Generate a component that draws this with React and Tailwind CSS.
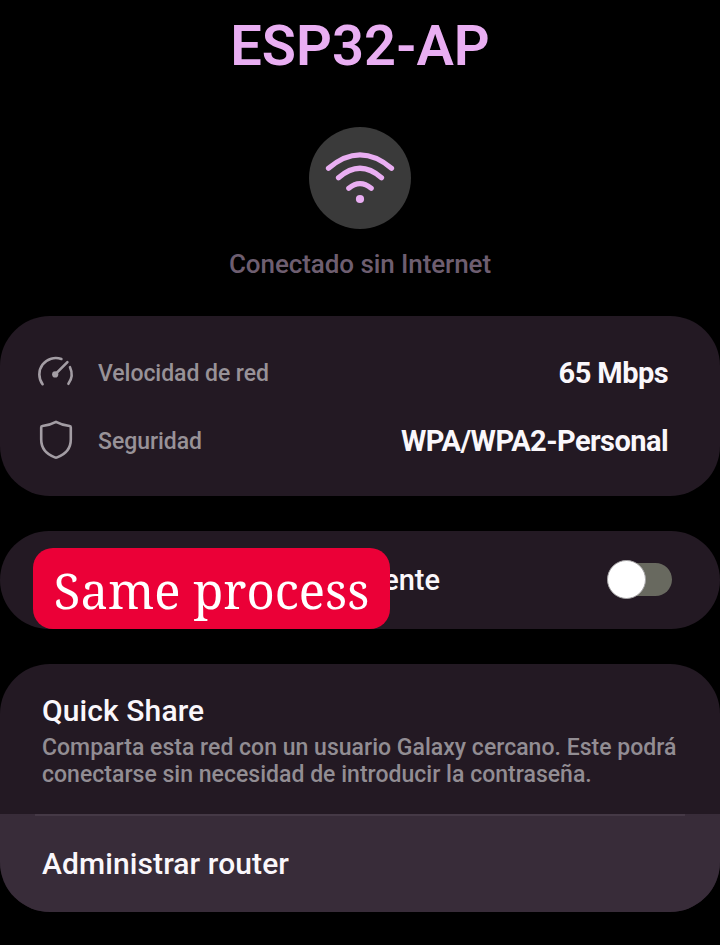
const Gauge = () => (
  <svg viewBox="0 0 40 44" className="h-11 w-10 shrink-0" fill="none" stroke="#a39da4" strokeWidth="2.6" strokeLinecap="round">
    <path d="M6.6 33.2A16.4 16.4 0 0 1 25.4 8M34 16.2A16.4 16.4 0 0 1 32.4 32.8" />
    <path d="M19.4 23.2L31.4 11.2" />
    <circle cx="19.2" cy="23.4" r="3.1" fill="#a39da4" stroke="none" />
  </svg>
);

const Shield = () => (
  <svg viewBox="0 0 40 44" className="h-11 w-10 shrink-0" fill="none" stroke="#a39da4" strokeWidth="2.6" strokeLinejoin="round">
    <path d="M20 2.9C24.2 5.2 29 6.6 33.6 7Q34.8 7.2 34.8 8.4V20.5C34.8 29.5 29 35.4 21.2 38.4Q20 38.9 18.8 38.4C11 35.4 5.2 29.5 5.2 20.5V8.4Q5.2 7.2 6.4 7C11 6.6 15.8 5.2 20 2.9Z" />
  </svg>
);

const Wifi = () => (
  <svg viewBox="0 0 102 102" className="size-full" fill="none" stroke="#e9aef2" strokeWidth="5.2" strokeLinecap="round">
    <path d="M19.5 41.3Q51 14.5 82.5 41.3" />
    <path d="M29.5 50.8Q51 31.8 72.5 50.8" />
    <path d="M39.8 61.3Q51 52 62.2 61.3" />
    <circle cx="51" cy="72" r="4.1" fill="#e9aef2" stroke="none" />
  </svg>
);

function InfoRow({ icon, label, value }) {
  return (
    <div className="flex h-[68px] items-center">
      {icon}
      <span className="ml-[22px] pt-[2px] text-[23px] tracking-[-0.05px] text-[#989298]">{label}</span>
      <span className="ml-auto pt-[2px] text-[29px] font-bold tracking-[-0.57px] text-[#faf7fb]">{value}</span>
    </div>
  );
}

export default function App() {
  return (
    <main className="flex h-[945px] w-[720px] flex-col overflow-hidden bg-black font-['Roboto',sans-serif] font-medium">
      <header className="flex h-[316px] shrink-0 flex-col items-center">
        <h1 className="mt-[13px] text-[56px] leading-[66px] font-semibold tracking-[0px] text-[#e9aef2]">ESP32-AP</h1>
        <div className="mt-12 size-[102px] rounded-full bg-[#3a3a3a]"><Wifi /></div>
        <p className="mt-5 text-[26px] leading-[30px] tracking-[-0.08px] text-[#6e5e70]">Conectado sin Internet</p>
      </header>

      <section className="h-[180px] shrink-0 rounded-[50px] bg-[#231923] pt-[23px] pr-[52px] pl-9">
        <InfoRow icon={<Gauge />} label="Velocidad de red" value="65 Mbps" />
        <InfoRow icon={<Shield />} label="Seguridad" value="WPA/WPA2-Personal" />
      </section>

      <section className="relative mt-[35px] flex h-[98px] shrink-0 items-center justify-between rounded-[49px] bg-[#231923] pr-12 pl-[42px]">
        <span className="flex w-[398px] justify-end pt-px text-[29px] text-[#faf7fb]">ente</span>
        <div className="mb-[2px] flex h-[33px] w-[64px] items-center rounded-full bg-[#68695f]">
          <div className="-ml-px size-[39px] shrink-0 rounded-full border border-[#a5a3a5] bg-white" />
        </div>
        <div className="absolute top-[17px] left-[33px] flex h-[81px] w-[357px] items-center justify-center rounded-[20px] bg-[#eb0037]">
          <span className="pt-[3px] font-['Noto_Serif','DejaVu_Serif_Condensed','DejaVu_Serif',serif] text-[49px] leading-none font-normal whitespace-nowrap text-white">Same process</span>
        </div>
      </section>

      <section className="mt-[35px] flex h-[248px] shrink-0 flex-col overflow-hidden rounded-[50px] bg-[#231923]">
        <div className="h-[150px] pt-[29px] pl-[42px]">
          <h2 className="text-[30px] leading-[36px] tracking-[0.1px] text-[#faf7fb]">Quick Share</h2>
          <p className="mt-[5px] text-[23px] leading-[27px] tracking-[0.02px] whitespace-nowrap text-[#928d93]">
            Comparta esta red con un usuario Galaxy cercano. Este podrá<br />
            conectarse sin necesidad de introducir la contraseña.
          </p>
        </div>
        <div className="h-[98px] bg-[#382c39] px-[35px]">
          <div className="h-[2px] bg-[#453946]" />
          <h2 className="ml-[7px] pt-[30px] text-[30px] leading-[36px] tracking-[0.1px] text-[#faf7fb]">Administrar router</h2>
        </div>
      </section>
    </main>
  );
}
